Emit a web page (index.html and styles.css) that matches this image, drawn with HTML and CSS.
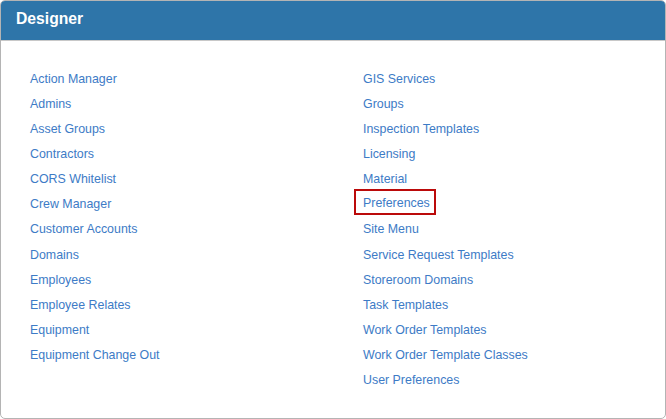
FILE: index.html
```html
<!DOCTYPE html>
<html>
<head>
<meta charset="utf-8">
<link rel="stylesheet" href="styles.css">
</head>
<body>
<div class="panel">
  <div class="panel-header">Designer</div>
  <div class="panel-body">
    <div class="col">
      <a class="item">Action Manager</a>
      <a class="item">Admins</a>
      <a class="item">Asset Groups</a>
      <a class="item">Contractors</a>
      <a class="item">CORS Whitelist</a>
      <a class="item">Crew Manager</a>
      <a class="item">Customer Accounts</a>
      <a class="item">Domains</a>
      <a class="item">Employees</a>
      <a class="item">Employee Relates</a>
      <a class="item">Equipment</a>
      <a class="item">Equipment Change Out</a>
    </div>
    <div class="col">
      <a class="item">GIS Services</a>
      <a class="item">Groups</a>
      <a class="item">Inspection Templates</a>
      <a class="item">Licensing</a>
      <a class="item">Material</a>
      <a class="item"><span class="highlight">Preferences</span></a>
      <a class="item">Site Menu</a>
      <a class="item">Service Request Templates</a>
      <a class="item">Storeroom Domains</a>
      <a class="item">Task Templates</a>
      <a class="item">Work Order Templates</a>
      <a class="item">Work Order Template Classes</a>
      <a class="item">User Preferences</a>
    </div>
  </div>
</div>
</body>
</html>
```
FILE: styles.css
```css
html, body {
  margin: 0;
  padding: 0;
  background: #ffffff;
}
body {
  font-family: "Liberation Sans", Arial, sans-serif;
}
.panel {
  width: 664px;
  height: 417px;
  border: 1px solid #b4b4b4;
  border-radius: 5px;
  overflow: hidden;
  background: #ffffff;
}
.panel-header {
  height: 39px;
  background: #2e75a9;
  border-bottom: 1px solid #c8c8c8;
  color: #ffffff;
  font-size: 15.7px;
  font-weight: bold;
  line-height: 36px;
  padding-left: 15px;
}
.panel-body {
  display: grid;
  grid-template-columns: 333px 1fr;
  padding: 25px 0 0 29px;
}
.col {
  display: flex;
  flex-direction: column;
}
.item {
  display: flex;
  align-items: center;
  height: 25px;
  font-size: 12.4px;
  color: #3d7bc6;
  text-decoration: none;
}
.item:nth-child(7) {
  margin-bottom: 1px;
}
.highlight {
  display: inline-block;
  border: 2px solid #bb0a0a;
  line-height: 19px;
  padding: 3px 4px 0 7px;
  margin-left: -9px;
  margin-top: -3px;
}
```
